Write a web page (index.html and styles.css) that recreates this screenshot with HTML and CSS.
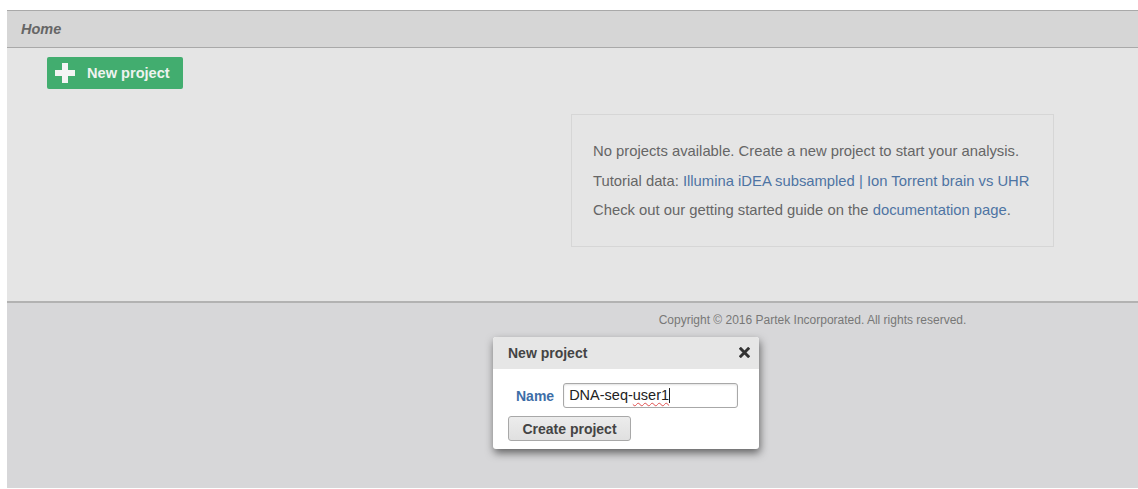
FILE: index.html
```html
<!DOCTYPE html>
<html lang="en">
<head>
<meta charset="utf-8">
<title>Home</title>
<link rel="stylesheet" href="styles.css">
</head>
<body>
<div class="page">
  <header class="crumbs"><span class="crumb">Home</span></header>

  <main class="home">
    <div class="toolbar">
      <button class="btn-new" type="button">
        <svg class="plus" viewBox="0 0 20 20" width="20" height="20" aria-hidden="true">
          <path d="M7 0h6v7h7v6h-7v7H7v-7H0V7h7z" fill="#f4f4f4"/>
        </svg>
        <span>New project</span>
      </button>
    </div>
    <div class="columns">
      <div></div>
      <section class="notice">
        <p>No projects available. Create a new project to start your analysis.</p>
        <p>Tutorial data: <a href="#">Illumina iDEA subsampled</a> <a href="#">|</a> <a href="#">Ion Torrent brain vs UHR</a></p>
        <p>Check out our getting started guide on the <a href="#">documentation page</a>.</p>
      </section>
    </div>
  </main>

  <footer class="foot">
    <div class="columns">
      <div></div>
      <p class="copy">Copyright © 2016 Partek Incorporated. All rights reserved.</p>
    </div>
  </footer>

  <div class="dialog" role="dialog" aria-label="New project">
    <div class="dialog-head">
      <span class="dialog-title">New project</span>
      <svg class="close" viewBox="0 0 12 12" width="11" height="11" aria-hidden="true">
        <path d="M2 2L10 10M10 2L2 10" stroke="#333" stroke-width="3.2" stroke-linecap="square"/>
      </svg>
    </div>
    <div class="dialog-body">
      <div class="field">
        <label class="field-label">Name</label>
        <div class="text-input" role="textbox">DNA-seq-<span class="misspelt">user1</span><span class="caret"></span></div>
      </div>
      <button class="btn-create" type="button">Create project</button>
    </div>
  </div>
</div>
</body>
</html>
```

FILE: styles.css
```css
html, body {
  margin: 0;
  padding: 0;
  background: #fff;
}

body {
  padding: 10px 0 0 7px;
  font-family: "Liberation Sans", Arial, sans-serif;
  color: #666;
}

.page {
  position: relative;
  width: 1131px;
}

/* breadcrumb bar */
.crumbs {
  height: 36px;
  border-top: 1px solid #a9a9a9;
  border-bottom: 1px solid #a9a9a9;
  background: #d6d6d6;
  display: flex;
  align-items: center;
  padding-left: 14px;
}

.crumb {
  font-size: 14.5px;
  font-weight: bold;
  font-style: italic;
  color: #666;
}

/* main area */
.home {
  height: 253px;
  background: #e5e5e5;
  border-bottom: 2px solid #b2b2b2;
}

.toolbar {
  padding: 9px 0 0 40px;
  height: 32px;
}

.btn-new {
  display: flex;
  align-items: center;
  gap: 12px;
  height: 32px;
  width: 136px;
  padding: 0 0 0 8px;
  border: none;
  border-radius: 2px;
  background: #42ad6f;
  color: #eef3ef;
  font-family: "Liberation Sans", Arial, sans-serif;
  font-size: 14.6px;
  font-weight: bold;
}

.plus {
  display: block;
}

.columns {
  display: grid;
  grid-template-columns: 564px 483px;
}

.notice {
  margin-top: 25px;
  border: 1px solid #d6d6d6;
  padding: 22px 0 0 21px;
  box-sizing: border-box;
  height: 133px;
}

.notice p {
  margin: 0;
  font-size: 14.8px;
  line-height: 29.5px;
  color: #666;
  white-space: nowrap;
}

.notice a {
  color: #4e74a3;
  text-decoration: none;
}

/* footer */
.foot {
  height: 185px;
  background: #d7d7d9;
}

.copy {
  margin: 0;
  padding-top: 10px;
  font-size: 12px;
  line-height: 14px;
  color: #777;
  text-align: center;
}

/* new-project dialog, drawn above the footer */
.dialog {
  position: absolute;
  left: 486px;
  top: 327px;
  width: 266px;
  background: #fff;
  border-radius: 3px;
  box-shadow: 1px 4px 8px rgba(0, 0, 0, 0.55);
  overflow: hidden;
}

.dialog-head {
  height: 32px;
  background: #e6e6e6;
  display: flex;
  align-items: center;
  justify-content: space-between;
  padding: 0 9px 0 15px;
}

.dialog-title {
  font-size: 14px;
  font-weight: bold;
  color: #444;
}

.close {
  display: block;
  margin-top: -2px;
}

.dialog-body {
  padding: 14px 15px 8px;
}

.field {
  display: flex;
  align-items: center;
  gap: 9px;
  padding-left: 8px;
}

.field-label {
  font-size: 14px;
  font-weight: bold;
  color: #3d6ea7;
}

.text-input {
  width: 175px;
  height: 25px;
  box-sizing: border-box;
  border: 1px solid #a8a8a8;
  border-radius: 3px;
  padding: 0 5px;
  font-size: 14.5px;
  line-height: 23px;
  color: #222;
  box-shadow: inset 0 1px 2px rgba(0, 0, 0, 0.12);
}

.misspelt {
  text-decoration: underline wavy #e05050;
  text-decoration-thickness: 1px;
  text-underline-offset: 2px;
}

.caret {
  display: inline-block;
  width: 1px;
  height: 15px;
  background: #222;
  vertical-align: -3px;
}

.btn-create {
  margin-top: 8px;
  width: 123px;
  height: 25px;
  border: 1px solid #a8a8a8;
  border-radius: 3px;
  background: linear-gradient(#ececec, #e0e0e0);
  font-family: "Liberation Sans", Arial, sans-serif;
  font-size: 14px;
  font-weight: bold;
  color: #444;
}
```
